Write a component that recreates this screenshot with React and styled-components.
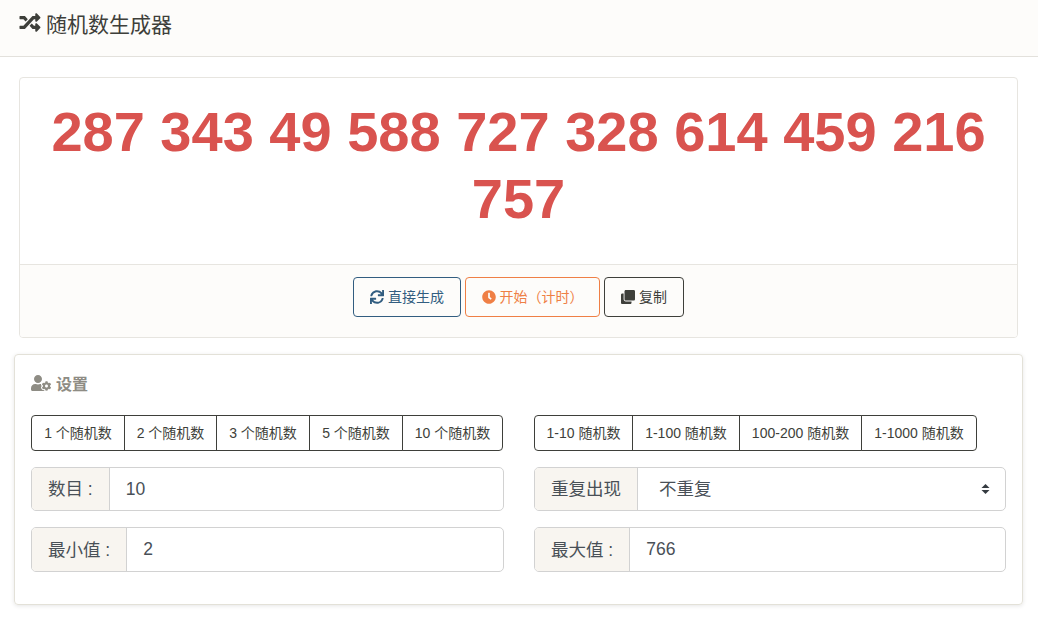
import React from "react";
import styled, { createGlobalStyle } from "styled-components";
import { FaRandom, FaSync, FaClock, FaClone, FaUserCog } from "react-icons/fa";

const Global = createGlobalStyle`
  * { box-sizing: border-box; }
  html, body { margin: 0; padding: 0; background: #fff; }
  body { font-family: "Liberation Sans", "Noto Sans CJK SC", sans-serif; color: #3e3f3a; }
`;
const Page = styled.div`
  width: 1038px;
  height: 622px;
  overflow: hidden;
`;
const Header = styled.header`
  height: 57px;
  padding: 0 18px 11px;
  display: flex;
  align-items: center;
  gap: 4px;
  background: #fdfcfa;
  border-bottom: 1px solid #e3e1dc;
  font-size: 21px;
  color: #3e3f3a;
  svg { width: 24px; height: 21px; margin-top: -1px; }
`;
const ResultCard = styled.section`
  margin: 20px 20px 0 19px;
  height: 261px;
  border: 1px solid #e7e5e0;
  border-radius: 4px;
  display: flex;
  flex-direction: column;
  overflow: hidden;
`;
const Numbers = styled.div`
  height: 186px;
  padding: 20px 20px 0;
  text-align: center;
  font-size: 56px;
  line-height: 67px;
  font-weight: 700;
  color: #d9534f;
`;
const ResultFooter = styled.div`
  flex: 1;
  background: #fdfcfa;
  border-top: 1px solid #e7e5e0;
  display: flex;
  justify-content: center;
  gap: 4px;
  padding-top: 12px;
`;
const ActionButton = styled.button`
  height: 40px;
  width: ${(p) => p.$w}px;
  padding: 0 0 2px;
  display: flex;
  align-items: center;
  justify-content: center;
  gap: 4px;
  font: inherit;
  font-size: 14px;
  color: ${(p) => p.$color};
  background: transparent;
  border: 1px solid ${(p) => p.$color};
  border-radius: 4px;
  svg { width: 14px; height: 14px; margin-top: 2px; }
`;
const SettingsCard = styled.section`
  margin: 16px 15px 0 14px;
  height: 251px;
  padding: 17px 16px 0;
  border: 1px solid #e3e1d8;
  border-radius: 4px;
  box-shadow: 0 1px 4px rgba(0, 0, 0, 0.1);
`;
const SettingsTitle = styled.h2`
  margin: 0;
  height: 22px;
  display: flex;
  align-items: center;
  gap: 5px;
  font-size: 16px;
  font-weight: 700;
  color: #8e8c84;
  svg { width: 20px; height: 16px; }
`;
const Columns = styled.div`
  margin-top: 21px;
  display: grid;
  grid-template-columns: 473px 472px;
  column-gap: 30px;
`;
const Column = styled.div`
  display: flex;
  flex-direction: column;
  gap: 16px;
`;
const Presets = styled.div`
  display: flex;
  height: 36px;
`;
const Preset = styled.button`
  width: ${(p) => p.$w}px;
  height: 36px;
  padding: 0 0 2px;
  font: inherit;
  font-size: 14px;
  color: #3e3f3a;
  background: #fff;
  border: 1px solid #3e3f3a;
  margin-left: -1px;
  &:first-child { margin-left: 0; border-radius: 4px 0 0 4px; }
  &:last-child { border-radius: 0 4px 4px 0; }
`;
const Field = styled.div`
  display: flex;
  height: ${(p) => p.$h}px;
  border: 1px solid #d2d2d2;
  border-radius: 5px;
  overflow: hidden;
  font-size: 17.5px;
`;
const FieldLabel = styled.span`
  padding: 0 16px 3px;
  display: flex;
  align-items: center;
  background: #f8f5f0;
  border-right: 1px solid #d2d2d2;
  color: #495057;
  white-space: pre;
`;
const FieldValue = styled.span`
  flex: 1;
  padding: 0 16px;
  display: flex;
  align-items: center;
  justify-content: space-between;
  color: #495057;
`;
const SelectValue = styled(FieldValue)`
  padding: 0 15px 3px 21px;
`;
const CaretIcon = styled.svg`
  width: 9px;
  height: 12px;
  margin-top: 3px;
`;
const Caret = () => (
  <CaretIcon viewBox="0 0 9 12" aria-hidden="true">
    <path d="M4.5 1 8.5 5H.5zM4.5 11 .5 7h8z" fill="#343a40" />
  </CaretIcon>
);

const counts = [[1, 94], [2, 93], [3, 94], [5, 94], [10, 101]];
const ranges = [["1-10", 99], ["1-100", 108], ["100-200", 123], ["1-1000", 116]];

export default function App() {
  return (
    <Page>
      <Global />
      <Header><FaRandom />随机数生成器</Header>
      <ResultCard>
        <Numbers>287 343 49 588 727 328 614 459 216 757</Numbers>
        <ResultFooter>
          <ActionButton $w={108} $color="#325d80"><FaSync />直接生成</ActionButton>
          <ActionButton $w={135} $color="#ef7f45"><FaClock />开始（计时）</ActionButton>
          <ActionButton $w={80} $color="#3e3f3a"><FaClone />复制</ActionButton>
        </ResultFooter>
      </ResultCard>
      <SettingsCard>
        <SettingsTitle><FaUserCog />设置</SettingsTitle>
        <Columns>
          <Column>
            <Presets>
              {counts.map(([n, w]) => <Preset key={n} $w={w}>{n} 个随机数</Preset>)}
            </Presets>
            <Field $h={44}><FieldLabel>数目 :</FieldLabel><FieldValue>10</FieldValue></Field>
            <Field $h={45}><FieldLabel>最小值 :</FieldLabel><FieldValue>2</FieldValue></Field>
          </Column>
          <Column>
            <Presets>
              {ranges.map(([r, w]) => <Preset key={r} $w={w}>{r} 随机数</Preset>)}
            </Presets>
            <Field $h={44}><FieldLabel>重复出现</FieldLabel><SelectValue>不重复<Caret /></SelectValue></Field>
            <Field $h={45}><FieldLabel>最大值 :</FieldLabel><FieldValue>766</FieldValue></Field>
          </Column>
        </Columns>
      </SettingsCard>
    </Page>
  );
}
